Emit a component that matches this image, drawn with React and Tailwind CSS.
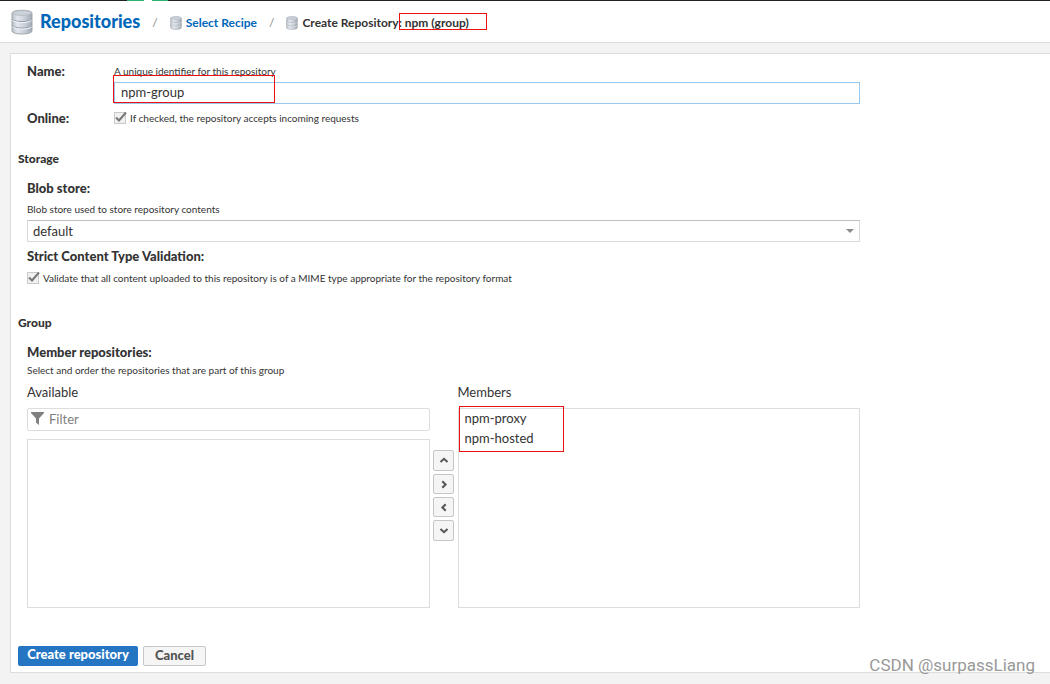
import React from "react";
import { useState } from "react";
import clsx from "clsx";

const MEMBERS = ["npm-proxy", "npm-hosted"];

const ARROWS = [
  { label: "Move up", d: "M1.5 6 5 2.8 8.5 6" },
  { label: "Add", d: "M3.3 1.2 6.6 4.5 3.3 7.8" },
  { label: "Remove", d: "M6.7 1.2 3.4 4.5 6.7 7.8" },
  { label: "Move down", d: "M1.5 3 5 6.2 8.5 3" },
];

function DatabaseIcon({ className }) {
  return (
    <svg viewBox="0 0 22 26" className={className} aria-hidden="true">
      <defs>
        <linearGradient id="drum" x1="0" x2="1" y1="0" y2="0">
          <stop offset="0" stopColor="#b4bbc4" />
          <stop offset="0.25" stopColor="#e2e7ec" />
          <stop offset="0.6" stopColor="#cbd2da" />
          <stop offset="1" stopColor="#a0a8b2" />
        </linearGradient>
      </defs>
      <path d="M1 4C1 0.300 21 0.300 21 4V22C21 26 1 26 1 22Z" fill="url(#drum)" stroke="#a2a8af" strokeWidth="1" />
      <ellipse cx="11" cy="4" rx="9.5" ry="2.4" fill="#ccd2d9" stroke="#b1b7be" strokeWidth="0.8" />
      <path d="M1 10C3 13.4 19 13.4 21 10M1 16.500C3 19.900 19 19.900 21 16.500" fill="none" stroke="#969da6" strokeWidth="1" />
      <path d="M1.500 11.300C4 14.400 18 14.400 20.500 11.300M1.500 17.800C4 20.900 18 20.900 20.500 17.800" fill="none" stroke="#f1f4f6" strokeWidth="1" />
    </svg>
  );
}

function CheckField({ id, label, checked, onChange }) {
  return (
    <div className="flex h-4 items-center">
      <span className="relative flex h-3 w-3">
        <input
          id={id}
          type="checkbox"
          checked={checked}
          onChange={onChange}
          className="h-3 w-3 appearance-none border border-[#c9c9c9] bg-[#f1f1f1]"
        />
        {checked && (
          <svg viewBox="0 0 13 12" className="pointer-events-none absolute -top-px left-0 h-3 w-[13px]" aria-hidden="true">
            <path d="M2 6.500 5 9.500 12 1.500" fill="none" stroke="#777" strokeWidth="2" />
          </svg>
        )}
      </span>
      <label htmlFor={id} className="ml-1 text-[10px] leading-4">
        {label}
      </label>
    </div>
  );
}

export default function App() {
  const [form, setForm] = useState({ name: "npm-group", online: true, blob: "default", strict: true, filter: "" });

  return (
    <div className="relative flex min-h-screen flex-col overflow-hidden bg-[#f3f3f3] font-['Lato','Liberation_Sans',sans-serif] text-[13px] leading-4 text-[#333]">
      {/* bottom edge of the app bar */}
      <div className="flex h-px bg-[#222]">
        <div className="ml-[127px] w-[17px] bg-[#2db573]" />
        <div className="w-2 bg-white" />
        <div className="w-4 bg-[#2db573]" />
      </div>

      <header className="flex h-[42px] items-center border-b border-[#ddd] bg-white pl-[11px]">
        <DatabaseIcon className="h-[26px] w-[22px]" />
        <h1 className="ml-[7px] pb-0.5 text-lg font-black text-[#0067b9]">
          <a href="#repositories">Repositories</a>
        </h1>
        <nav className="flex items-center pt-[3px] text-[12px] font-bold">
          <span className="ml-3 font-normal text-[#888]">/</span>
          <DatabaseIcon className="ml-3 h-[14px] w-3" />
          <a href="#recipe" className="ml-1 text-[#0067b9]">Select Recipe</a>
          <span className="ml-3 font-normal text-[#888]">/</span>
          <DatabaseIcon className="ml-3 h-[14px] w-3" />
          <span className="ml-1">Create Repository:</span>
          <span className="relative ml-[3px]">
            npm (group)
            <span className="absolute -left-1.5 -top-0.5 h-[17px] w-[88px] border border-[#e11]" />
          </span>
        </nav>
      </header>

      <main className="pt-[10px] pb-[11px] pl-[10px]">
        <form onSubmit={(e) => e.preventDefault()} className="border border-r-0 border-[#ddd] bg-white pt-[9px] pb-[6px] pl-[7px]">
          <div className="max-w-[842px] pl-[9px]">
            <div className="grid grid-cols-[87px_1fr]">
              <label htmlFor="name" className="font-black">Name:</label>
              <div className="relative">
                <p className="mb-[3px] text-[10px] leading-4">A unique identifier for this repository</p>
                <input
                  id="name"
                  type="text"
                  value={form.name}
                  onChange={(e) => setForm({ ...form, name: e.target.value })}
                  className="block h-[22px] w-full border border-[#98c8ee] px-1.5 pb-0.5 outline-none"
                />
                <span className="pointer-events-none absolute -left-px top-3 h-7 w-[162px] border border-[#e11]" />
              </div>
            </div>
            <div className="mt-1.5 grid grid-cols-[87px_1fr]">
              <span className="font-black">Online:</span>
              <CheckField
                id="online"
                label="If checked, the repository accepts incoming requests"
                checked={form.online}
                onChange={(e) => setForm({ ...form, online: e.target.checked })}
              />
            </div>
          </div>

          <h2 className="mt-[25px] text-[12px] leading-4 font-black">Storage</h2>
          <div className="max-w-[842px] pt-[13px] pl-[9px]">
            <label htmlFor="blob" className="block font-black">Blob store:</label>
            <p className="mt-[5px] mb-[3px] text-[10px] leading-4">Blob store used to store repository contents</p>
            <div className="relative">
              <select
                id="blob"
                value={form.blob}
                onChange={(e) => setForm({ ...form, blob: e.target.value })}
                className="block h-[22px] w-full appearance-none border border-[#d9d9d9] border-t-[#c0c0c0] bg-white px-[5px] outline-none"
              >
                <option value="default">default</option>
              </select>
              <svg viewBox="0 0 8 4" className="pointer-events-none absolute right-1.5 top-[9px] h-1 w-2" aria-hidden="true">
                <path d="M0 0H8L4 4Z" fill="#8b8b8b" />
              </svg>
            </div>
            <p className="mt-1.5 mb-1.5 font-black">Strict Content Type Validation:</p>
            <CheckField
              id="strict"
              label="Validate that all content uploaded to this repository is of a MIME type appropriate for the repository format"
              checked={form.strict}
              onChange={(e) => setForm({ ...form, strict: e.target.checked })}
            />
          </div>

          <h2 className="mt-[29px] text-[12px] leading-4 font-black">Group</h2>
          <div className="max-w-[842px] pt-[13px] pl-[9px]">
            <h3 className="font-black">Member repositories:</h3>
            <p className="mt-0.5 text-[10px] leading-4">Select and order the repositories that are part of this group</p>
            <div className="mt-1.5 grid grid-cols-[1fr_28px_1fr]">
              <label htmlFor="filter">Available</label>
              <span />
              <span>Members</span>
            </div>
            <div className="mt-2 grid h-[200px] grid-cols-[1fr_28px_1fr]">
              <div className="flex flex-col gap-2">
                <div className="flex h-[23px] items-center rounded-xs border border-[#ddd] pb-0.5 pl-[3px]">
                  <svg viewBox="0 0 13 13" className="h-[13px] w-[13px]" aria-hidden="true">
                    <path d="M0 0H13V1L8 6.500V13L5 10.500V6.500L0 1Z" fill="#808080" />
                  </svg>
                  <input
                    id="filter"
                    type="text"
                    placeholder="Filter"
                    value={form.filter}
                    onChange={(e) => setForm({ ...form, filter: e.target.value })}
                    className="ml-[5px] min-w-0 grow outline-none placeholder:text-[#808080]"
                  />
                </div>
                <div className="grow border border-[#ddd]" />
              </div>
              <div className="flex flex-col items-center gap-[3px] pt-[42px]">
                {ARROWS.map((arrow, i) => (
                  <button
                    key={arrow.label}
                    type="button"
                    aria-label={arrow.label}
                    className={clsx(
                      "flex w-[21px] items-center justify-center rounded-xs border border-[#c6c6c6] bg-[#f5f5f5]",
                      i % 3 === 0 ? "h-[21px]" : "h-5"
                    )}
                  >
                    <svg viewBox="0 0 10 9" className="h-[9px] w-[10px]" aria-hidden="true">
                      <path d={arrow.d} fill="none" stroke="#555" strokeWidth="2" />
                    </svg>
                  </button>
                ))}
              </div>
              <div className="relative border border-[#ddd]">
                <ul>
                  {MEMBERS.map((m) => (
                    <li key={m} className="h-5 px-1.5 leading-[18px]">{m}</li>
                  ))}
                </ul>
                <span className="absolute -top-[3px] left-0 h-[46px] w-[105px] border border-[#e11]" />
              </div>
            </div>
          </div>

          <div className="mt-[38px] flex gap-[5px] font-black">
            <button type="submit" className="h-5 w-[120px] rounded-xs bg-[#2476c3] pb-1 text-white">Create repository</button>
            <button type="button" className="h-5 w-[63px] rounded-xs border border-[#c6c6c6] bg-[#f5f5f5] pb-1 text-[#555]">Cancel</button>
          </div>
        </form>
      </main>

      <span className="absolute right-[15px] bottom-[7px] font-['Roboto','Liberation_Sans',sans-serif] text-[17px] leading-6 text-[#999]">
        CSDN @surpassLiang
      </span>
    </div>
  );
}
